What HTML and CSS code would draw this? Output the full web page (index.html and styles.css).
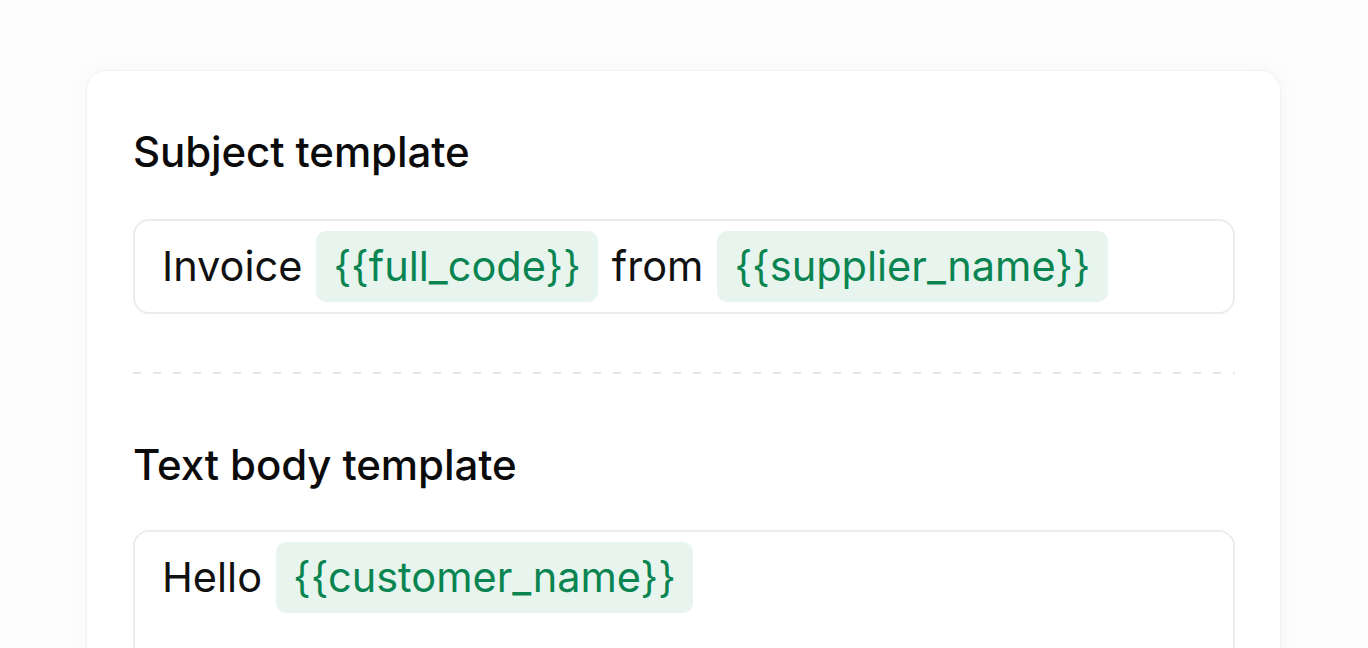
FILE: index.html
```html
<!DOCTYPE html>
<html lang="en">
<head>
<meta charset="utf-8">
<title>Email templates</title>
<link rel="stylesheet" href="styles.css">
</head>
<body>
<div class="page">
  <div class="card">
    <section class="field">
      <h2 class="label">Subject template</h2>
      <div class="input">
        <span class="word">Invoice</span>
        <span class="chip">{{full_code}}</span>
        <span class="word">from</span>
        <span class="chip">{{supplier_name}}</span>
      </div>
    </section>
    <div class="divider"></div>
    <section class="field">
      <h2 class="label">Text body template</h2>
      <div class="input textarea">
        <span class="word">Hello</span>
        <span class="chip">{{customer_name}}</span>
      </div>
    </section>
  </div>
</div>
</body>
</html>
```
FILE: styles.css
```css
html, body {
  margin: 0;
  padding: 0;
  background: #fdfdfd;
  height: 100%;
  overflow: hidden;
}
body {
  font-family: "Inter", "Noto Sans", sans-serif;
  color: #0b0b0c;
}
.page {
  padding: 70px 0 0 86px;
}
.card {
  width: 1195px;
  box-sizing: border-box;
  background: #ffffff;
  border: 1px solid #f1f1f1;
  border-radius: 20px;
  box-shadow: 0 0 28px rgba(0, 0, 0, 0.035);
  padding: 57px 45px 60px 46px;
  height: 700px;
}
.label {
  margin: 0;
  font-size: 42px;
  line-height: 48px;
  font-weight: 500;
  letter-spacing: -0.1px;
}
.input {
  margin-top: 43px;
  border: 2px solid #ececee;
  border-radius: 16px;
  padding: 10px 27px;
  display: flex;
  align-items: center;
  gap: 14px;
  font-size: 41.5px;
  line-height: 71px;
}
.textarea {
  margin-top: 41px;
  align-items: flex-start;
  height: 200px;
}
.word {
  color: #111112;
}
.chip {
  background: #e7f5ee;
  color: #0a8552;
  border-radius: 10px;
  padding: 0 17px;
  height: 71px;
}
.divider {
  margin: 58px 0 67px;
  height: 2px;
  background: repeating-linear-gradient(to right, #e6e6e8 0 8px, transparent 8px 20px);
}
```
